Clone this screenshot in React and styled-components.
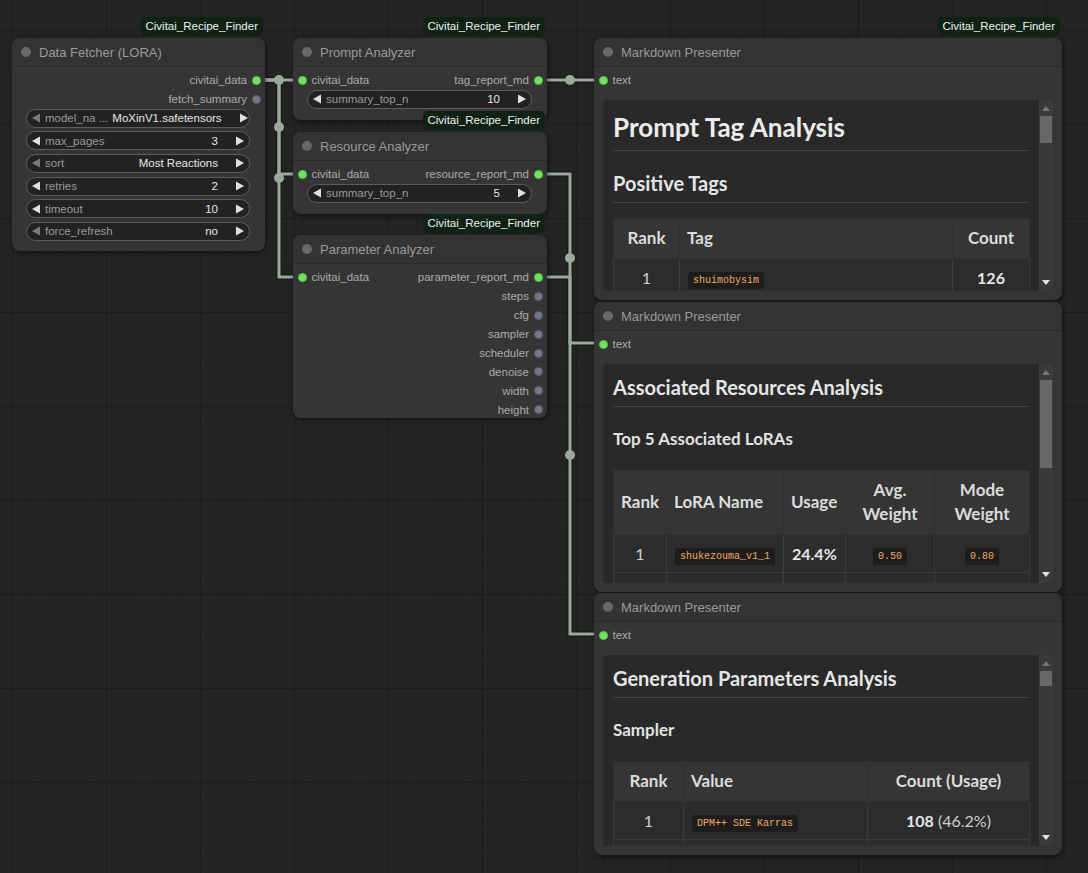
import React from 'react'
import styled, { createGlobalStyle } from 'styled-components'

const GlobalStyle = createGlobalStyle`
  html, body {
    margin: 0;
    padding: 0;
    background: #232323;
  }
  body {
    font-family: "Liberation Sans", Arial, sans-serif;
  }
`

// ---- canvas + wires ----

const Canvas = styled.div`
  position: relative;
  width: 1088px;
  height: 873px;
  overflow: hidden;
  background-color: #242424;
  background-image:
    linear-gradient(90deg, #1c1c1c 1px, transparent 1px),
    linear-gradient(#1c1c1c 1px, transparent 1px),
    linear-gradient(90deg, #202020 1px, transparent 1px),
    linear-gradient(#202020 1px, transparent 1px);
  background-size: 94px 94px, 94px 94px, 9.4px 9.4px, 9.4px 9.4px;
  background-position: 12px 0, 0 30px, 12px 0, 0 30px;
`

const WireLayer = styled.svg`
  position: absolute;
  left: 0;
  top: 0;
  pointer-events: none;
`

const links = [
  { d: 'M257 80 H302', mid: [279, 80] },
  { d: 'M257 80 H279 V174 H302', mid: [279, 127] },
  { d: 'M257 80 H279 V277 H302', mid: [279, 178] },
  { d: 'M538 80 H603', mid: [570, 80] },
  { d: 'M538 174 H570 V343 H603', mid: [570, 258] },
  { d: 'M538 277 H570 V634 H603', mid: [570, 455] },
]

function Wires() {
  return (
    <WireLayer width="1088" height="873">
      {links.map((l, i) => (
        <path key={'o' + i} d={l.d} fill="none" stroke="#141414" strokeWidth="5" />
      ))}
      {links.map((l, i) => (
        <path key={'w' + i} d={l.d} fill="none" stroke="#9bab9b" strokeWidth="3" />
      ))}
      {links.map((l, i) => (
        <circle key={'c' + i} cx={l.mid[0]} cy={l.mid[1]} r="5" fill="#9bab9b" />
      ))}
    </WireLayer>
  )
}

// ---- node chrome ----

const NodeBox = styled.div`
  position: absolute;
  left: ${p => p.$x}px;
  top: ${p => p.$y}px;
  width: ${p => p.$w}px;
  height: ${p => p.$h}px;
  box-sizing: border-box;
  background: #353535;
  border-radius: 8px;
  box-shadow: 1px 2px 5px rgba(0, 0, 0, 0.45);
  display: flex;
  flex-direction: column;
`

const Badge = styled.div`
  position: absolute;
  right: 2px;
  bottom: calc(100% + 2px);
  height: 19px;
  padding: 0 5px;
  border-radius: 5px;
  background: #0f2213;
  color: #f0f0f0;
  font-size: 11.5px;
  line-height: 19px;
  white-space: nowrap;
`

const Header = styled.div`
  height: 28px;
  flex-shrink: 0;
  display: flex;
  align-items: center;
  gap: 8px;
  padding-left: 9px;
  border-bottom: 1px solid #2a2a2a;
  border-radius: 8px 8px 0 0;
  background: #333333;
`

const TitleDot = styled.span`
  width: 10px;
  height: 10px;
  border-radius: 50%;
  background: #686868;
`

const Title = styled.span`
  font-size: 13px;
  color: #9a9a9a;
  white-space: nowrap;
`

const Body = styled.div`
  flex: 1;
  display: flex;
  flex-direction: column;
  padding-top: 4px;
  min-height: 0;
`

const SlotRow = styled.div`
  height: 18.9px;
  flex-shrink: 0;
  display: flex;
  align-items: center;
  justify-content: space-between;
  font-size: 11.5px;
  color: #ababab;
`

const Slot = styled.div`
  display: flex;
  align-items: center;
  gap: 5px;
  padding: ${p => (p.$out ? '0 4px 0 0' : '0 0 0 4.5px')};
  margin-left: ${p => (p.$out ? 'auto' : '0')};
`

const Dot = styled.span`
  width: 9px;
  height: 9px;
  border-radius: 50%;
  box-sizing: border-box;
  background: ${p => (p.$on ? '#6fe35c' : '#76768a')};
  border: 1px solid ${p => (p.$on ? '#5cc94b' : '#5d5d6e')};
`

function Input({ name }) {
  return (
    <Slot>
      <Dot $on />
      <span>{name}</span>
    </Slot>
  )
}

function Output({ name, on }) {
  return (
    <Slot $out>
      <span>{name}</span>
      <Dot $on={on} />
    </Slot>
  )
}

// ---- widgets ----

const Widgets = styled.div`
  display: flex;
  flex-direction: column;
  gap: 3.6px;
  margin: 0 15px 0 13.5px;
`

const WidgetPill = styled.div`
  height: 19px;
  box-sizing: border-box;
  border: 1px solid #5c5c5c;
  border-radius: 10px;
  background: #222222;
  display: flex;
  align-items: center;
  padding: 0 5px 0 5.5px;
  font-size: 11.5px;
`

const WLabel = styled.span`
  flex: 1 0 auto;
  margin: 0 4px 0 5px;
  color: #9a9a9a;
  white-space: nowrap;
`

const WValue = styled.span`
  color: #e6e6e6;
  margin-right: 18px;
  white-space: nowrap;
`

const ArrowSvg = styled.svg`
  width: 8px;
  height: 10px;
  flex-shrink: 0;
  fill: ${p => (p.$dim ? '#7a7a7a' : '#e0e0e0')};
`

function Arrow({ left, dim }) {
  return (
    <ArrowSvg viewBox="0 0 8 10" $dim={dim}>
      <polygon points={left ? '8,0.5 8,9.5 0,5' : '0,0.5 0,9.5 8,5'} />
    </ArrowSvg>
  )
}

function Widget({ label, value, dim }) {
  return (
    <WidgetPill>
      <Arrow left dim={dim} />
      <WLabel>{label}</WLabel>
      <WValue>{value}</WValue>
      <Arrow />
    </WidgetPill>
  )
}

// ---- markdown presenter ----

const MdBox = styled.div`
  flex: 1;
  min-height: 0;
  margin: 10px 9px 9px 9px;
  background: #292929;
  border-radius: 4px;
  display: flex;
  overflow: hidden;
`

const MdScroll = styled.div`
  flex: 1;
  min-width: 0;
  padding: 10px 10px 0 10px;
  overflow: hidden;
  font-family: Lato, "Open Sans", sans-serif;
  color: #d4d4d4;
`

const Track = styled.div`
  position: relative;
  width: 14px;
  flex-shrink: 0;
  background: #3a3a3a;
  display: flex;
  flex-direction: column;
  justify-content: space-between;
  align-items: center;
  padding: 6px 0 6px;
  box-sizing: border-box;
`

const TrackArrow = styled.svg`
  width: 8px;
  height: 5px;
  fill: ${p => (p.$light ? '#e6e6e6' : '#777777')};
`

const Thumb = styled.div`
  position: absolute;
  left: 1px;
  right: 1px;
  top: ${p => p.$top}px;
  height: ${p => p.$h}px;
  background: #686868;
`

function Scrollbar({ top, h }) {
  return (
    <Track>
      <TrackArrow viewBox="0 0 8 5">
        <polygon points="0,5 8,5 4,0" />
      </TrackArrow>
      <Thumb $top={top} $h={h} />
      <TrackArrow viewBox="0 0 8 5" $light>
        <polygon points="0,0 8,0 4,5" />
      </TrackArrow>
    </Track>
  )
}

const H1 = styled.h1`
  margin: 1px 0 0;
  padding-bottom: 7px;
  font-size: 26px;
  line-height: 32px;
  font-weight: 700;
  color: #ececec;
  border-bottom: 1px solid #444444;
  white-space: nowrap;
`

const H2 = styled.h2`
  margin: ${p => (p.$first ? '0 0 15px' : '19px 0 15px')};
  padding-bottom: 6px;
  font-size: 20px;
  line-height: 26px;
  font-weight: 700;
  color: #e6e6e6;
  border-bottom: 1px solid #444444;
  white-space: nowrap;
`

const H3 = styled.h3`
  margin: 21px 0 20px;
  font-size: 17px;
  line-height: 22px;
  font-weight: 700;
  color: #e2e2e2;
  white-space: nowrap;
`

const Table = styled.table`
  width: 100%;
  table-layout: fixed;
  border-collapse: collapse;
  font-size: 16px;
`

const Col = styled.col`
  width: ${p => p.$w}px;
`

const Th = styled.th`
  background: #353535;
  border: 1px solid #2f2f2f;
  padding: 7.5px 7px;
  line-height: 24px;
  font-size: 17px;
  font-weight: 700;
  color: #dcdcdc;
  text-align: ${p => p.$align || 'center'};
  white-space: ${p => (p.$wrap ? 'normal' : 'nowrap')};
`

const Td = styled.td`
  background: #2c2c2c;
  border: 1px solid #3c3c3c;
  padding: 8px 8px;
  height: 21px;
  line-height: 21px;
  color: #cfcfcf;
  text-align: ${p => p.$align || 'center'};
  white-space: nowrap;
  overflow: hidden;
`

const Strong = styled.strong`
  font-weight: 700;
  color: #e6e6e6;
`

const Code = styled.code`
  font-family: "Liberation Mono", "DejaVu Sans Mono", monospace;
  font-size: 10px;
  line-height: 10px;
  vertical-align: 1px;
  color: #f2a85e;
  background: #1d1d1d;
  padding: 3px 5px;
  border-radius: 3px;
`

const BLANK = '\u00a0'

function Presenter({ x, y, h, thumb, badge, children }) {
  return (
    <NodeBox $x={x} $y={y} $w={468} $h={h}>
      {badge && <Badge>Civitai_Recipe_Finder</Badge>}
      <Header>
        <TitleDot />
        <Title>Markdown Presenter</Title>
      </Header>
      <Body>
        <SlotRow>
          <Input name="text" />
        </SlotRow>
        <MdBox>
          <MdScroll>{children}</MdScroll>
          <Scrollbar top={thumb[0]} h={thumb[1]} />
        </MdBox>
      </Body>
    </NodeBox>
  )
}

function Node({ x, y, w, h, title, children }) {
  return (
    <NodeBox $x={x} $y={y} $w={w} $h={h}>
      <Badge>Civitai_Recipe_Finder</Badge>
      <Header>
        <TitleDot />
        <Title>{title}</Title>
      </Header>
      <Body>{children}</Body>
    </NodeBox>
  )
}

const paramOutputs = ['steps', 'cfg', 'sampler', 'scheduler', 'denoise', 'width', 'height']

function BlankRow({ cols }) {
  return (
    <tr>
      {Array.from({ length: cols }).map((_, i) => (
        <Td key={i}>{BLANK}</Td>
      ))}
    </tr>
  )
}

export default function App() {
  return (
    <Canvas>
      <GlobalStyle />
      <Wires />

      <Node x={12} y={38} w={253} h={213} title="Data Fetcher (LORA)">
        <SlotRow>
          <Output name="civitai_data" on />
        </SlotRow>
        <SlotRow>
          <Output name="fetch_summary" />
        </SlotRow>
        <Widgets>
          <Widget label="model_na ..." value="MoXinV1.safetensors" dim />
          <Widget label="max_pages" value="3" />
          <Widget label="sort" value="Most Reactions" dim />
          <Widget label="retries" value="2" />
          <Widget label="timeout" value="10" />
          <Widget label="force_refresh" value="no" dim />
        </Widgets>
      </Node>

      <Node x={293} y={38} w={254} h={82} title="Prompt Analyzer">
        <SlotRow>
          <Input name="civitai_data" />
          <Output name="tag_report_md" on />
        </SlotRow>
        <Widgets>
          <Widget label="summary_top_n" value="10" />
        </Widgets>
      </Node>

      <Node x={293} y={132} w={254} h={82} title="Resource Analyzer">
        <SlotRow>
          <Input name="civitai_data" />
          <Output name="resource_report_md" on />
        </SlotRow>
        <Widgets>
          <Widget label="summary_top_n" value="5" />
        </Widgets>
      </Node>

      <Node x={293} y={235} w={254} h={183} title="Parameter Analyzer">
        <SlotRow>
          <Input name="civitai_data" />
          <Output name="parameter_report_md" on />
        </SlotRow>
        {paramOutputs.map(n => (
          <SlotRow key={n}>
            <Output name={n} />
          </SlotRow>
        ))}
      </Node>

      <Presenter x={594} y={38} h={262} thumb={[16, 27]} badge>
        <H1>Prompt Tag Analysis</H1>
        <H2>Positive Tags</H2>
        <Table>
          <colgroup>
            <Col $w={66} />
            <Col $w={273} />
            <Col $w={77} />
          </colgroup>
          <thead>
            <tr>
              <Th>Rank</Th>
              <Th $align="left">Tag</Th>
              <Th>Count</Th>
            </tr>
          </thead>
          <tbody>
            <tr>
              <Td>1</Td>
              <Td $align="left"><Code>shuimobysim</Code></Td>
              <Td><Strong>126</Strong></Td>
            </tr>
          </tbody>
        </Table>
      </Presenter>

      <Presenter x={594} y={302} h={290} thumb={[16, 88]}>
        <H2 $first>Associated Resources Analysis</H2>
        <H3>Top 5 Associated LoRAs</H3>
        <Table>
          <colgroup>
            <Col $w={53} />
            <Col $w={117} />
            <Col $w={62} />
            <Col $w={89} />
            <Col $w={95} />
          </colgroup>
          <thead>
            <tr>
              <Th>Rank</Th>
              <Th $align="left">LoRA Name</Th>
              <Th $align="left">Usage</Th>
              <Th $wrap>Avg. Weight</Th>
              <Th $wrap>Mode Weight</Th>
            </tr>
          </thead>
          <tbody>
            <tr>
              <Td>1</Td>
              <Td $align="left"><Code>shukezouma_v1_1</Code></Td>
              <Td $align="left"><Strong>24.4%</Strong></Td>
              <Td><Code>0.50</Code></Td>
              <Td><Code>0.80</Code></Td>
            </tr>
            <BlankRow cols={5} />
          </tbody>
        </Table>
      </Presenter>

      <Presenter x={594} y={593} h={262} thumb={[16, 15]}>
        <H2 $first>Generation Parameters Analysis</H2>
        <H3>Sampler</H3>
        <Table>
          <colgroup>
            <Col $w={70} />
            <Col $w={184} />
            <Col $w={162} />
          </colgroup>
          <thead>
            <tr>
              <Th>Rank</Th>
              <Th $align="left">Value</Th>
              <Th>Count (Usage)</Th>
            </tr>
          </thead>
          <tbody>
            <tr>
              <Td>1</Td>
              <Td $align="left"><Code>DPM++ SDE Karras</Code></Td>
              <Td><Strong>108</Strong> (46.2%)</Td>
            </tr>
            <BlankRow cols={3} />
          </tbody>
        </Table>
      </Presenter>
    </Canvas>
  )
}
